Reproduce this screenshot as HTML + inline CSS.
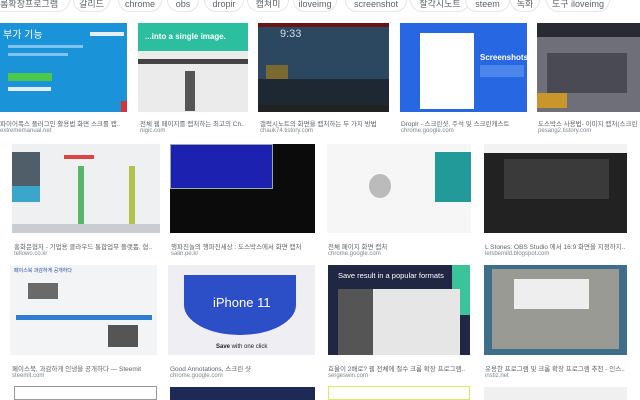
<!DOCTYPE html>
<html><head><meta charset="utf-8"><style>
*{margin:0;padding:0;box-sizing:border-box}
body{width:640px;height:400px;overflow:hidden;background:#fff;position:relative;font-family:"Liberation Sans","Noto Sans CJK KR",sans-serif}
.chip{position:absolute;top:-12px;height:24px;border:1px solid #e4e6ea;border-radius:12px;font-size:9px;color:#5f6368;text-align:center;line-height:30px;background:#fff}
.im{position:absolute;overflow:hidden}
.cap{position:absolute;font-size:6.5px;color:#5f6368;white-space:nowrap;overflow:hidden}
.src{position:absolute;font-size:6px;color:#80868b;white-space:nowrap}
</style></head><body>
<div class="chip" style="left:-20px;width:90px">크롬확장프로그램</div>
<div class="chip" style="left:73px;width:37px">갈리드</div>
<div class="chip" style="left:118px;width:44px">chrome</div>
<div class="chip" style="left:167px;width:32px">obs</div>
<div class="chip" style="left:204px;width:40px">dropir</div>
<div class="chip" style="left:247px;width:42px">캡쳐미</div>
<div class="chip" style="left:293px;width:44px">iloveimg</div>
<div class="chip" style="left:345px;width:62px">screenshot</div>
<div class="chip" style="left:410px;width:60px">잘각시노트</div>
<div class="chip" style="left:465px;width:45px">steem</div>
<div class="chip" style="left:510px;width:30px">녹화</div>
<div class="chip" style="left:546px;width:64px">도구 iloveimg</div>

<!-- row1 -->
<div class="im" style="left:0;top:23px;width:127px;height:89px;background:#1a93d8">
 <div style="position:absolute;left:3px;top:3px;color:#fff;font-size:10px">부가 기능</div>
 <div style="position:absolute;left:8px;top:22px;width:75px;height:3px;background:#7fc4ee"></div>
 <div style="position:absolute;left:8px;top:30px;width:60px;height:3px;background:#7fc4ee"></div>
 <div style="position:absolute;left:8px;top:50px;width:44px;height:8px;background:#4cc94a"></div>
 <div style="position:absolute;left:8px;top:64px;width:43px;height:4px;background:#e6eef5"></div>
 <div style="position:absolute;left:90px;top:9px;width:34px;height:4px;background:#e6eef5"></div>
 <div style="position:absolute;left:121px;top:78px;width:6px;height:11px;background:#d8333a"></div>
</div>
<div class="im" style="left:138px;top:23px;width:110px;height:89px;background:#ebebeb">
 <div style="height:28px;background:#2bbfa0;color:#fff;font-size:8px;font-weight:bold;line-height:28px;padding-left:7px">...into a single image.</div>
 <div style="height:5px;background:#444;margin-top:8px"></div>
 <div style="position:absolute;left:47px;top:48px;width:10px;height:40px;background:#555"></div>
</div>
<div class="im" style="left:258px;top:23px;width:131px;height:89px;background:#2b4860">
 <div style="position:absolute;left:0;top:0;width:131px;height:4px;background:#6a1515"></div>
 <div style="position:absolute;left:22px;top:5px;color:#cde;font-size:11px">9:33</div>
 <div style="position:absolute;left:8px;top:42px;width:22px;height:14px;background:#7a6a30"></div>
 <div style="position:absolute;left:0;top:56px;width:131px;height:26px;background:#1d2833"></div>
 <div style="position:absolute;left:0;top:82px;width:131px;height:7px;background:#222"></div>
</div>
<div class="im" style="left:400px;top:23px;width:127px;height:89px;background:#2867e2">
 <div style="position:absolute;left:20px;top:10px;width:54px;height:76px;background:#fff"></div>
 <div style="position:absolute;left:80px;top:30px;color:#fff;font-size:8px;font-weight:bold">Screenshots</div>
 <div style="position:absolute;left:80px;top:42px;width:44px;height:12px;background:#4d86ea"></div>
</div>
<div class="im" style="left:537px;top:23px;width:103px;height:89px;background:#6f6f7a">
 <div style="position:absolute;left:0;top:0;width:103px;height:14px;background:#2a2a35"></div>
 <div style="position:absolute;left:10px;top:30px;width:80px;height:40px;background:#4a4a55"></div>
 <div style="position:absolute;left:0;top:70px;width:30px;height:15px;background:#c8962a"></div>
</div>
<div class="cap" style="left:0;top:118px;width:125px">파이어폭스 플러그인 활용법 화면 스크롤 캡..</div>
<div class="src" style="left:0;top:128px">extrememanual.net</div>
<div class="cap" style="left:140px;top:118px;width:108px">전체 웹 페이지를 캡처하는 최고의 Ch..</div>
<div class="src" style="left:140px;top:128px">nigic.com</div>
<div class="cap" style="left:260px;top:118px;width:128px">갤럭시노트의 화면을 캡처하는 두 가지 방법</div>
<div class="src" style="left:260px;top:128px">chauk74.tistory.com</div>
<div class="cap" style="left:401px;top:118px;width:126px">Droplr - 스크린샷, 주석 및 스크린캐스트</div>
<div class="src" style="left:401px;top:128px">chrome.google.com</div>
<div class="cap" style="left:538px;top:118px;width:102px">도스박스 사용법- 이미지 캡처(스크린</div>
<div class="src" style="left:538px;top:128px">pesang2.tistory.com</div>

<!-- row2 -->
<div class="im" style="left:12px;top:144px;width:148px;height:89px;background:#eef0f1">
 <div style="position:absolute;left:0;top:8px;width:28px;height:34px;background:#4f5e69"></div>
 <div style="position:absolute;left:0;top:42px;width:28px;height:16px;background:#3aa6cc"></div>
 <div style="position:absolute;left:52px;top:11px;width:30px;height:4px;background:#d44"></div>
 <div style="position:absolute;left:66px;top:22px;width:6px;height:60px;background:#5cb56d"></div>
 <div style="position:absolute;left:117px;top:22px;width:6px;height:60px;background:#b2c24a"></div>
 <div style="position:absolute;left:0;top:80px;width:148px;height:9px;background:#c9ccd0"></div>
</div>
<div class="im" style="left:170px;top:144px;width:145px;height:89px;background:#0b0b0b">
 <div style="width:103px;height:45px;background:#1d21b0;border:1px solid #9aa"></div>
</div>
<div class="im" style="left:327px;top:144px;width:144px;height:89px;background:#f6f6f6">
 <div style="position:absolute;left:42px;top:30px;width:22px;height:24px;border-radius:50%;background:#bbb"></div>
 <div style="position:absolute;left:108px;top:8px;width:36px;height:50px;background:#239a9a"></div>
</div>
<div class="im" style="left:484px;top:144px;width:143px;height:89px;background:#222">
 <div style="position:absolute;left:0;top:0;width:143px;height:9px;background:#f2f2f2"></div>
 <div style="position:absolute;left:20px;top:15px;width:105px;height:40px;background:#3a3a3a"></div>
</div>
<div class="cap" style="left:14px;top:241px;width:144px">홍화문협자 - 기업용 클라우드 통합업무 플랫폼, 협..</div>
<div class="src" style="left:14px;top:251px">tellowo.co.kr</div>
<div class="cap" style="left:171px;top:241px;width:144px">행파진놀의 행파진세상 : 도스박스에서 화면 캡처</div>
<div class="src" style="left:171px;top:251px">salin.pe.kr</div>
<div class="cap" style="left:328px;top:241px;width:144px">전체 페이지 화면 캡처</div>
<div class="src" style="left:328px;top:251px">chrome.google.com</div>
<div class="cap" style="left:485px;top:241px;width:144px">L Stones: OBS Studio 에서 16:9 화면을 지정하지..</div>
<div class="src" style="left:485px;top:251px">letsbemild.blogspot.com</div>

<!-- row3 -->
<div class="im" style="left:10px;top:265px;width:147px;height:90px;background:#f2f4f6">
 <div style="position:absolute;left:4px;top:2px;font-size:5px;color:#2a4ea0">페이스북 과감하게 공개하다</div>
 <div style="position:absolute;left:18px;top:18px;width:30px;height:16px;background:#6a6a6a"></div>
 <div style="position:absolute;left:6px;top:50px;width:136px;height:5px;background:#2d7dd2"></div>
 <div style="position:absolute;left:98px;top:60px;width:30px;height:22px;background:#555"></div>
</div>
<div class="im" style="left:168px;top:265px;width:147px;height:90px;background:#eeeef3">
 <div style="position:absolute;left:16px;top:10px;width:112px;height:60px;background:#2c4fc8;border-radius:0 0 50% 50%"></div>
 <div style="position:absolute;left:45px;top:30px;color:#fff;font-size:13px">iPhone 11</div>
 <div style="position:absolute;left:48px;top:79px;font-size:6px;color:#222"><b>Save</b> with one click</div>
</div>
<div class="im" style="left:328px;top:265px;width:142px;height:90px;background:#1f2742">
 <div style="position:absolute;left:124px;top:0;width:20px;height:50px;background:#3cc39a"></div>
 <div style="position:absolute;left:10px;top:6px;color:#fff;font-size:7.5px">Save result in a popular formats</div>
 <div style="position:absolute;left:10px;top:24px;width:122px;height:66px;background:#e6e6e6"></div>
 <div style="position:absolute;left:10px;top:24px;width:35px;height:66px;background:#555"></div>
</div>
<div class="im" style="left:484px;top:265px;width:143px;height:90px;background:#3f6e8a">
 <div style="position:absolute;left:8px;top:4px;width:127px;height:80px;background:#9a9a95"></div>
 <div style="position:absolute;left:30px;top:14px;width:75px;height:30px;background:#eee"></div>
</div>
<div class="cap" style="left:12px;top:363px;width:144px">페이스북, 과감하게 인냉을 공개하다 — Steemit</div>
<div class="src" style="left:12px;top:373px">steemit.com</div>
<div class="cap" style="left:170px;top:363px;width:144px">Good Annotations, 스크린 샷</div>
<div class="src" style="left:170px;top:373px">chrome.google.com</div>
<div class="cap" style="left:328px;top:363px;width:144px">효율이 2배로? 웹 전체에 절수 크롬 확장 프로그램..</div>
<div class="src" style="left:328px;top:373px">sergeswin.com</div>
<div class="cap" style="left:485px;top:363px;width:142px">유용한 프로그램 및 크롬 확장 프로그램 추천 - 인스..</div>
<div class="src" style="left:485px;top:373px">instiz.net</div>

<!-- row4 -->
<div class="im" style="left:14px;top:386px;width:143px;height:14px;background:#fff;border:1px solid #999"></div>
<div class="im" style="left:170px;top:387px;width:145px;height:13px;background:#1c2a55"></div>
<div class="im" style="left:328px;top:386px;width:142px;height:14px;background:#fff;border:1px solid #d9ec6a"></div>
<div class="im" style="left:484px;top:387px;width:143px;height:13px;background:#f0f0f0"></div>
</body></html>
